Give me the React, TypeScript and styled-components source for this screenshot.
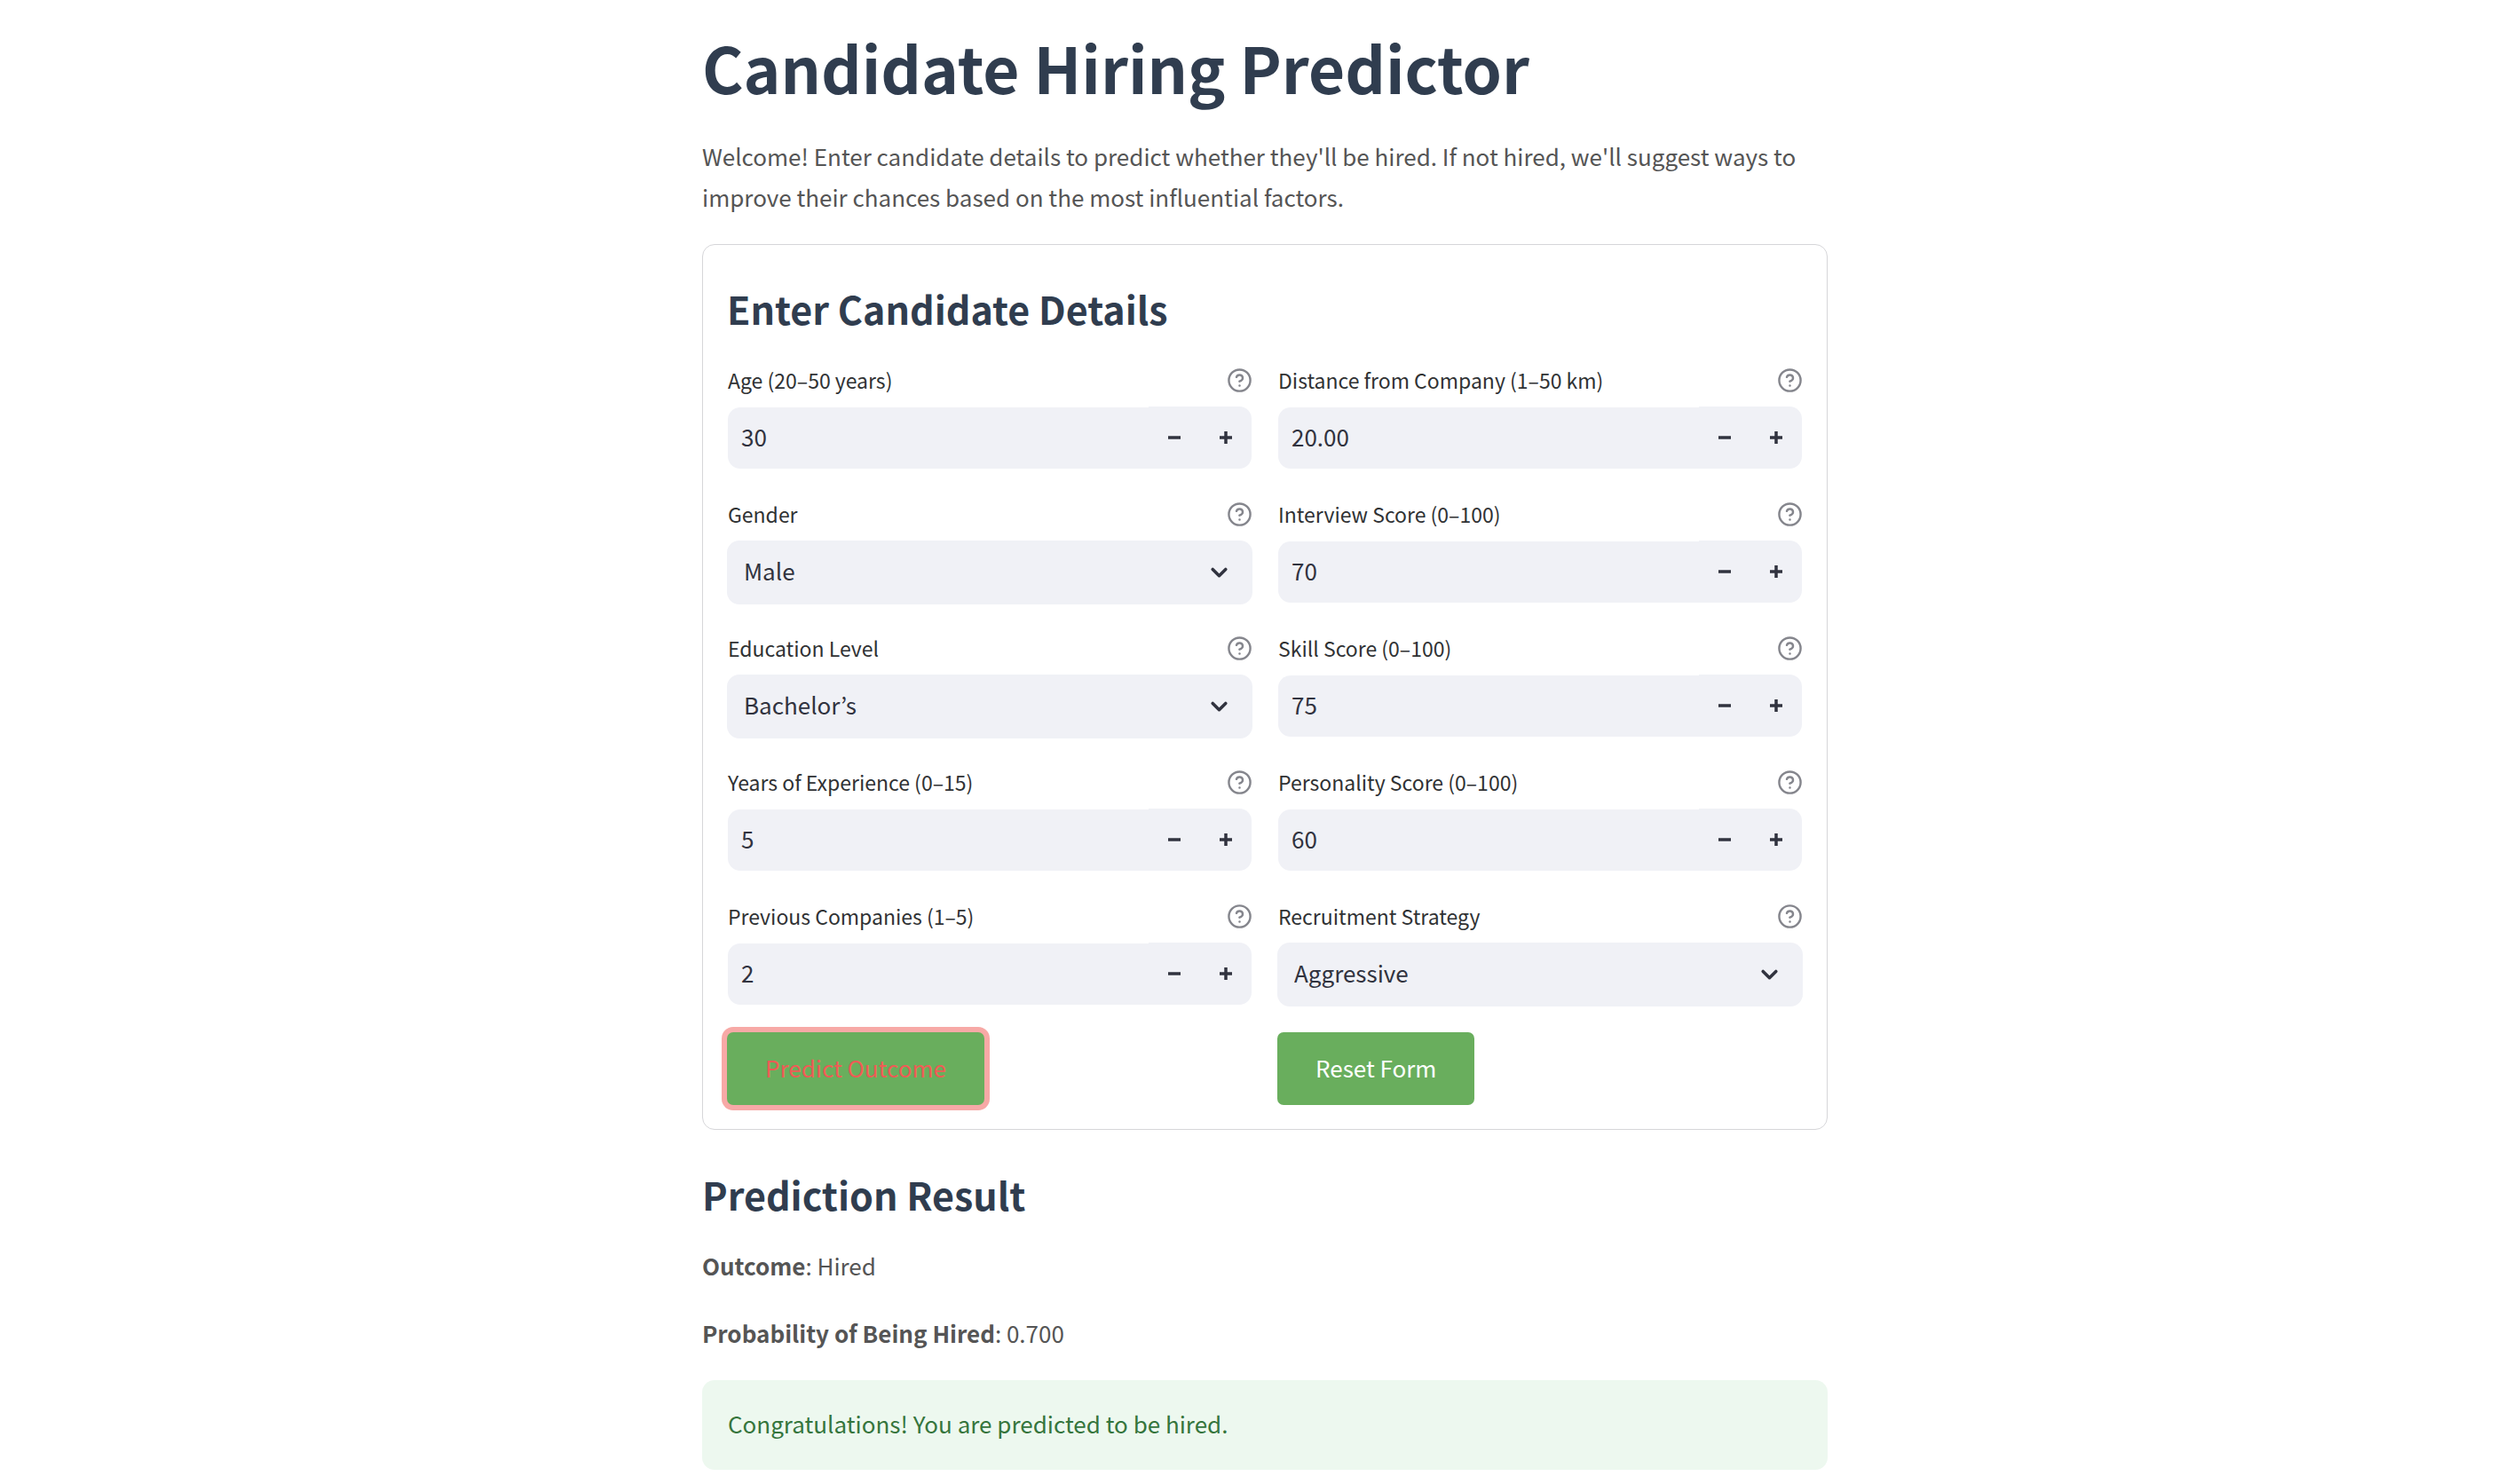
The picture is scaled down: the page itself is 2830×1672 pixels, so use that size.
import React, { useState } from "react";
import styled, { createGlobalStyle } from "styled-components";

const GlobalStyle = createGlobalStyle`
  *, *::before, *::after { box-sizing: border-box; }
  body { margin: 0; background: #fff; }
  body, button, input, select {
    font-family: "Noto Sans CJK KR", "Noto Sans", sans-serif;
    font-size: 26px;
    line-height: 46px;
  }
`;

const Page = styled.main`
  display: flex;
  justify-content: center;
  padding: 32px 0 16px 20px;
`;

const Column = styled.div`
  width: 100%;
  max-width: 1268px;
`;

const Title = styled.h1`
  margin: 0 0 35px;
  color: #303d4f;
  font-size: 71px;
  line-height: 86px;
  font-weight: 700;
`;

const Heading = styled.h2`
  margin: 0;
  color: #303d4f;
  font-size: 43px;
  line-height: 54px;
  font-weight: 600;
`;

const Text = styled.p`
  margin: 0 0 30px;
  color: #555;
`;

const FormCard = styled.form`
  margin-bottom: 45px;
  padding: 44px 27px 27px;
  border: 1px solid #d6d6d9;
  border-radius: 14px;
`;

const Columns = styled.div`
  display: grid;
  grid-template-columns: 1fr 1fr;
  column-gap: 28px;
  row-gap: 29px;
  margin-top: 40px;
`;

const FieldList = styled.div`
  display: flex;
  flex-direction: column;
  gap: 35px;
`;

const Field = styled.div`
  display: flex;
  flex-direction: column;
  gap: 15px;
`;

const LabelRow = styled.div`
  display: flex;
  align-items: center;
  justify-content: space-between;
  height: 29px;
`;

const Label = styled.label`
  padding: 0 0 2px 1px;
  color: #303234;
  font-size: 23px;
  line-height: 28px;
`;

const HelpButton = styled.button`
  display: flex;
  padding: 0;
  border: 0;
  background: none;
  color: #85868d;
  cursor: help;
`;

const NumberBox = styled.div`
  display: flex;
  align-items: flex-end;
  height: 72px;
  padding: 0 1px 2px;
`;

const NumberInput = styled.input`
  flex: 1;
  min-width: 0;
  height: 69px;
  padding: 0 15px 4px;
  border: 0;
  border-radius: 14px 0 0 14px;
  background: #f0f1f6;
  color: #31333f;
  outline: none;
`;

const StepButton = styled.button`
  display: flex;
  align-items: center;
  justify-content: center;
  width: 58px;
  height: 70px;
  padding: 0;
  border: 0;
  background: #f0f1f6;
  color: #31333f;
  cursor: pointer;

  &:last-child {
    border-radius: 0 14px 14px 0;
  }
`;

const SelectBox = styled.div`
  display: grid;
  align-items: center;
  height: 72px;
  border-radius: 14px;
  background: #f0f1f6;
  color: #31333f;

  > * {
    grid-area: 1 / 1;
  }

  > svg {
    justify-self: end;
    margin-right: 23px;
    pointer-events: none;
  }
`;

const Select = styled.select`
  width: 100%;
  height: 72px;
  padding: 0 60px 4px 19px;
  border: 0;
  border-radius: 14px;
  background: none;
  color: inherit;
  appearance: none;
  outline: none;
`;

const ActionButton = styled.button<{ $focused?: boolean }>`
  justify-self: start;
  height: 82px;
  padding: 0 43px 2px;
  border: 0;
  border-radius: 7px;
  background: #69ae5d;
  color: ${(p) => (p.$focused ? "#f05b55" : "#fff")};
  box-shadow: ${(p) => (p.$focused ? "0 0 0 6px #f7a9a6" : "none")};
  cursor: pointer;
`;

const Results = styled.section`
  display: flex;
  flex-direction: column;
  gap: 31px;
`;

const Alert = styled.div`
  padding: 26px 29px 29px;
  border-radius: 14px;
  background: #edf8ef;
  color: #35753c;
`;

const HelpIcon = () => (
  <svg width="29" height="29" viewBox="0 0 24 24" fill="none" stroke="currentColor" strokeWidth="2" strokeLinecap="round" strokeLinejoin="round" aria-hidden="true">
    <circle cx="12" cy="12" r="10" />
    <path d="M9.09 9a3 3 0 0 1 5.83 1c0 2-3 3-3 3" />
    <path d="M12 17h.01" />
  </svg>
);

const MinusIcon = () => (
  <svg width="14" height="14" viewBox="0 0 8 8" fill="currentColor" aria-hidden="true">
    <path d="M0 3v2h8V3z" />
  </svg>
);

const PlusIcon = () => (
  <svg width="14" height="14" viewBox="0 0 8 8" fill="currentColor" aria-hidden="true">
    <path d="M3 0v3H0v2h3v3h2V5h3V3H5V0z" />
  </svg>
);

const ChevronIcon = () => (
  <svg width="29" height="29" viewBox="0 0 29 29" fill="none" stroke="currentColor" strokeWidth="3.6" strokeLinecap="round" strokeLinejoin="round" aria-hidden="true">
    <path d="M7.200 10.500l7.300 7.200 7.300-7.200" />
  </svg>
);

type FieldSpec = {
  id: string;
  label: string;
  value: string;
  decimals?: number;
  options?: string[];
};

const LEFT: FieldSpec[] = [
  { id: "age", label: "Age (20–50 years)", value: "30" },
  { id: "gender", label: "Gender", value: "Male", options: ["Male", "Female"] },
  { id: "education", label: "Education Level", value: "Bachelor’s", options: ["Bachelor’s", "Master’s", "PhD"] },
  { id: "experience", label: "Years of Experience (0–15)", value: "5" },
  { id: "companies", label: "Previous Companies (1–5)", value: "2" },
];

const RIGHT: FieldSpec[] = [
  { id: "distance", label: "Distance from Company (1–50 km)", value: "20.00", decimals: 2 },
  { id: "interview", label: "Interview Score (0–100)", value: "70" },
  { id: "skill", label: "Skill Score (0–100)", value: "75" },
  { id: "personality", label: "Personality Score (0–100)", value: "60" },
  { id: "strategy", label: "Recruitment Strategy", value: "Aggressive", options: ["Aggressive", "Moderate", "Conservative"] },
];

function FormField({ spec }: { spec: FieldSpec }) {
  const [value, setValue] = useState(spec.value);
  const step = (by: number) => setValue((v) => (Number(v) + by).toFixed(spec.decimals ?? 0));

  return (
    <Field>
      <LabelRow>
        <Label htmlFor={spec.id}>{spec.label}</Label>
        <HelpButton type="button" aria-label={`Help for ${spec.label}`}>
          <HelpIcon />
        </HelpButton>
      </LabelRow>
      {spec.options ? (
        <SelectBox>
          <Select id={spec.id} value={value} onChange={(e) => setValue(e.target.value)}>
            {spec.options.map((o) => (
              <option key={o}>{o}</option>
            ))}
          </Select>
          <ChevronIcon />
        </SelectBox>
      ) : (
        <NumberBox>
          <NumberInput id={spec.id} inputMode="decimal" value={value} onChange={(e) => setValue(e.target.value)} />
          <StepButton type="button" aria-label={`Decrease ${spec.label}`} onClick={() => step(-1)}>
            <MinusIcon />
          </StepButton>
          <StepButton type="button" aria-label={`Increase ${spec.label}`} onClick={() => step(1)}>
            <PlusIcon />
          </StepButton>
        </NumberBox>
      )}
    </Field>
  );
}

export default function App() {
  const [formKey, setFormKey] = useState(0);

  return (
    <>
      <GlobalStyle />
      <Page>
        <Column>
          <Title>Candidate Hiring Predictor</Title>
          <Text>
            Welcome! Enter candidate details to predict whether they'll be hired. If not hired, we'll suggest ways to
            improve their chances based on the most influential factors.
          </Text>
          <FormCard onSubmit={(e) => e.preventDefault()}>
            <Heading>Enter Candidate Details</Heading>
            <Columns key={formKey}>
              {[LEFT, RIGHT].map((fields, i) => (
                <FieldList key={i}>
                  {fields.map((f) => (
                    <FormField key={f.id} spec={f} />
                  ))}
                </FieldList>
              ))}
              <ActionButton type="submit" $focused>
                Predict Outcome
              </ActionButton>
              <ActionButton type="button" onClick={() => setFormKey((k) => k + 1)}>
                Reset Form
              </ActionButton>
            </Columns>
          </FormCard>
          <Results>
            <Heading>Prediction Result</Heading>
            <div>
              <Text>
                <strong>Outcome</strong>: Hired
              </Text>
              <Text>
                <strong>Probability of Being Hired</strong>: 0.700
              </Text>
              <Alert role="status">Congratulations! You are predicted to be hired.</Alert>
            </div>
          </Results>
        </Column>
      </Page>
    </>
  );
}
